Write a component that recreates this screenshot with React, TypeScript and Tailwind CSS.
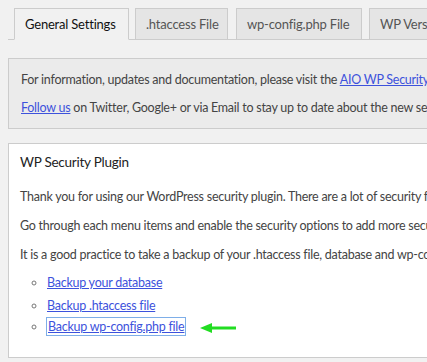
import React from "react";

const font = { fontFamily: 'Lato, "Open Sans", sans-serif' };

function Tab({ label, active, cls }: { label: string; active?: boolean; cls: string }) {
  return (
    <div
      className={`${cls} h-[32px] shrink-0 border border-[#cccccc] pl-[10px] text-[13px] tracking-[-0.2px] leading-[30px] whitespace-nowrap ${
        active ? "bg-[#f1f1f1] border-b-[#f1f1f1] text-[#111]" : "bg-[#e5e5e5] text-[#555]"
      }`}
    >
      {label}
    </div>
  );
}

export default function App() {
  return (
    <div className="w-[427px] h-[362px] overflow-hidden bg-[#f1f1f1] text-[12.5px] tracking-[-0.25px] text-[#444]" style={font}>
      <div className="w-[700px] pl-[8px] pt-[8px]">
        <div className="flex border-b border-[#cccccc] pl-[6px] h-[32px]">
          <Tab label="General Settings" active cls="w-[115px]" />
          <Tab label=".htaccess File" cls="w-[93px] ml-[6px]" />
          <Tab label="wp-config.php File" cls="w-[126px] ml-[8px]" />
          <Tab label="WP Version Info" cls="w-[120px] ml-[7px]" />
        </div>
        <div className="mt-[18px] h-[71px] border border-[#cccccc] bg-[#ebebeb] pl-[12px] pt-[11px] whitespace-nowrap">
          <p className="leading-[20px]">
            For information, updates and documentation, please visit the{" "}
            <a className="text-[#3d52dc] underline" href="#">AIO WP Security &amp; Firewall Plugin</a> Page.
          </p>
          <p className="leading-[20px] mt-[8px]">
            <a className="text-[#3d52dc] underline" href="#">Follow us</a> on Twitter, Google+ or via Email to stay up to date about the new security features of this plugin.
          </p>
        </div>
        <div className="mt-[14px] h-[215px] border border-[#cccccc] bg-white pl-[11px] whitespace-nowrap">
          <h3 className="text-[13.5px] leading-[20px] pt-[8px] text-[#222]">WP Security Plugin</h3>
          <p className="leading-[20px] mt-[15px]">
            Thank you for using our WordPress security plugin. There are a lot of security features in this plugin.
          </p>
          <p className="leading-[20px] mt-[9px]">
            Go through each menu items and enable the security options to add more security to your site.
          </p>
          <p className="leading-[20px] mt-[9px]">
            It is a good practice to take a backup of your .htaccess file, database and wp-config.php file before activating the security features.
          </p>
          <ul className="mt-[8px] pl-[27px] list-[circle] marker:text-[#777]">
            <li className="leading-[20px]">
              <a className="text-[#3d52dc] underline" href="#">Backup your database</a>
            </li>
            <li className="leading-[20px] mt-[3px]">
              <a className="text-[#3d52dc] underline" href="#">Backup .htaccess file</a>
            </li>
            <li className="leading-[20px] mt-[1px]">
              <a className="text-[#3d52dc] underline outline outline-1 outline-[#7eaee8] px-[1px] py-[1px]" href="#">Backup wp-config.php file</a>
              <svg width="38" height="10" viewBox="0 0 38 10" className="ml-[15px] inline-block align-middle">
                <line x1="6" y1="5" x2="36" y2="5" stroke="#22dd22" strokeWidth="3" />
                <polygon points="0,5 12,0 12,10" fill="#22dd22" />
              </svg>
            </li>
          </ul>
        </div>
      </div>
    </div>
  );
}
